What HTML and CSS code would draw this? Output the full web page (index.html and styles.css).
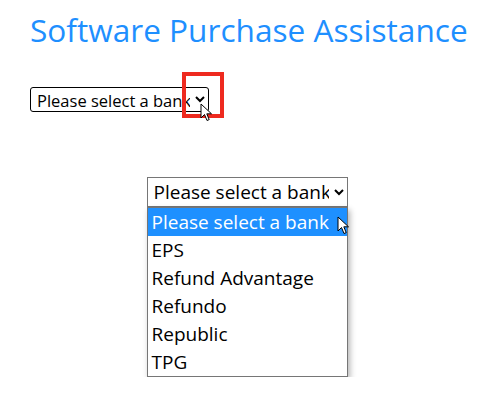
FILE: index.html
```html
<!DOCTYPE html>
<html lang="en">
<head>
<meta charset="utf-8">
<title>Software Purchase Assistance</title>
<link rel="stylesheet" href="styles.css">
</head>
<body>
<main class="page">
  <h1 class="title">Software Purchase Assistance</h1>
  <div class="first-row">
    <select class="bank-select small">
      <option>Please select a bank</option>
      <option>EPS</option>
      <option>Refund Advantage</option>
      <option>Refundo</option>
      <option>Republic</option>
      <option>TPG</option>
    </select>
    <div class="highlight"></div>
    <svg class="cursor cursor-a" width="13" height="19" viewBox="0 0 13 19"><path d="M1 1 L1 15 L4.5 11.5 L7 17.5 L9.2 16.6 L6.8 10.8 L11.5 10.8 Z" fill="#fff" stroke="#000" stroke-width="1" stroke-linejoin="round"/></svg>
  </div>
  <div class="center">
    <div class="open-select">
      <select class="bank-select large">
        <option>Please select a bank</option>
      </select>
      <ul class="options">
        <li class="option selected">Please select a bank</li>
        <li class="option">EPS</li>
        <li class="option">Refund Advantage</li>
        <li class="option">Refundo</li>
        <li class="option">Republic</li>
        <li class="option">TPG</li>
      </ul>
      <svg class="cursor cursor-b" width="13" height="19" viewBox="0 0 13 19"><path d="M1 1 L1 15 L4.5 11.5 L7 17.5 L9.2 16.6 L6.8 10.8 L11.5 10.8 Z" fill="#fff" stroke="#000" stroke-width="1" stroke-linejoin="round"/></svg>
    </div>
  </div>
</main>
</body>
</html>
```
FILE: styles.css
```css
html, body {
  margin: 0;
  padding: 0;
  background: #fff;
}
.page {
  font-family: "Open Sans", "Noto Sans", sans-serif;
  padding: 0 0 0 30px;
}
.title {
  margin: 0;
  padding-top: 7px;
  font-weight: 400;
  font-size: 31.6px;
  line-height: 45px;
  color: #1e8fff;
}
.first-row {
  position: relative;
  margin-top: 35px;
  height: 25px;
}
.bank-select {
  font-family: "Open Sans", "Noto Sans", sans-serif;
  color: #000;
  background: #fff;
  margin: 0;
}
.small {
  width: 179px;
  height: 25px;
  font-size: 16.5px;
  border: 1px solid #000;
  border-radius: 3px;
  padding: 0 2px;
}
.highlight {
  position: absolute;
  left: 152px;
  top: -15px;
  width: 34px;
  height: 38px;
  border: 4px solid #ee2a1f;
}
.cursor {
  position: absolute;
}
.cursor-a {
  left: 170px;
  top: 16px;
}
.center {
  display: flex;
  justify-content: center;
  margin-top: 65px;
  padding-right: 30px;
}
.open-select {
  position: relative;
  width: 201px;
}
.large {
  display: block;
  width: 201px;
  height: 30px;
  font-size: 19px;
  border: 1px solid #767676;
  border-radius: 0;
  padding: 0 2px;
}
.options {
  list-style: none;
  margin: 0;
  padding: 0;
  border: 1px solid #767676;
  box-shadow: 2px 3px 6px rgba(0,0,0,0.3);
  background: #fff;
}
.option {
  height: 28px;
  line-height: 28px;
  font-size: 19px;
  padding-left: 4px;
  color: #000;
  white-space: nowrap;
}
.selected {
  background: #1e90ff;
  color: #fff;
}
.cursor-b {
  left: 190px;
  top: 39px;
}
```
